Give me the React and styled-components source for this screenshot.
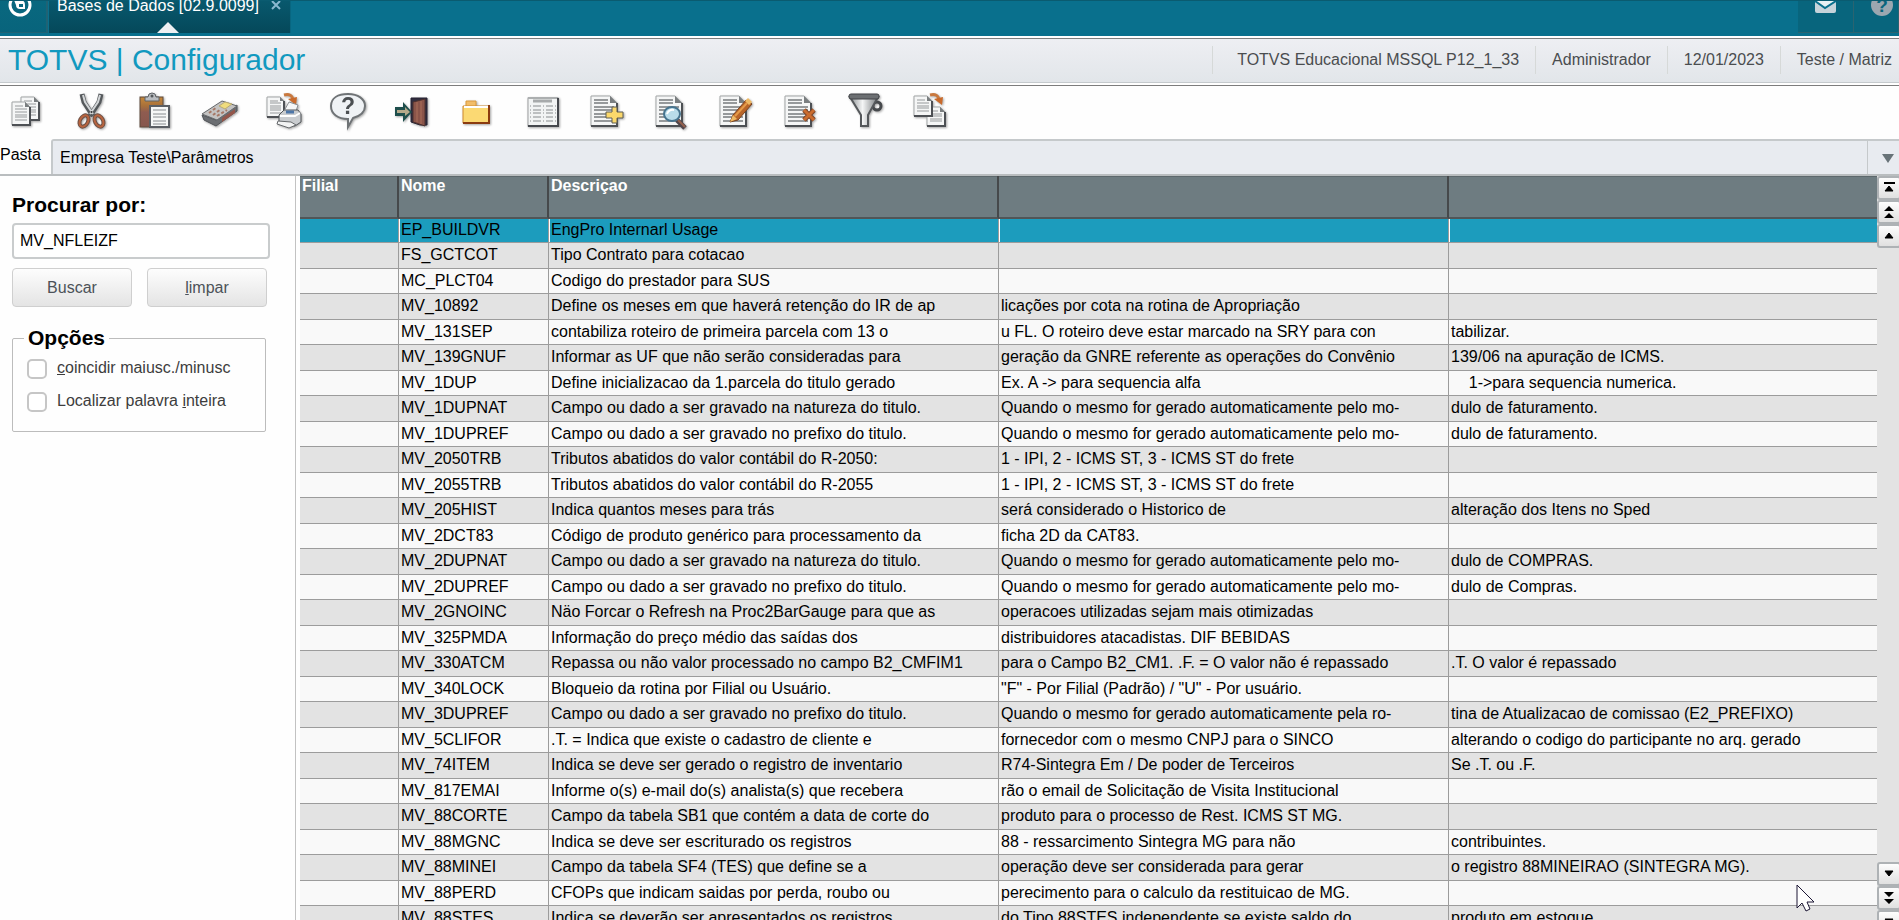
import React, { useState } from "react";
import styled, { createGlobalStyle } from "styled-components";

const GlobalStyle = createGlobalStyle`
  * {
    box-sizing: border-box;
  }
  body {
    margin: 0;
    overflow: hidden;
    background: #fefefe;
    color: #000;
    font-family: "Liberation Sans", Arial, sans-serif;
    font-size: 16px;
  }
  button,
  input {
    font: inherit;
  }
`;

const Page = styled.div`
  display: flex;
  flex-direction: column;
  height: 100vh;
  overflow: hidden;
`;

const TopBar = styled.header`
  display: flex;
  flex: none;
  height: 36px;
  padding-bottom: 3px;
  background: #09708d;
  border-top: 1px solid #0a5b70;
`;
const Home = styled.button`
  width: 48px;
  padding: 0 0 0 4px;
  border: none;
  border-right: 2px solid #1f6375;
  border-bottom: 1px solid #1f6375;
  background: linear-gradient(#09687f, #08647c);
  text-align: left;
  line-height: 0;
`;
const OpenTab = styled.div`
  position: relative;
  display: flex;
  align-items: flex-start;
  gap: 12px;
  width: 242px;
  margin-left: 1px;
  padding-left: 8px;
  background: linear-gradient(#08586d, #05485a);
  border-right: 1px solid #086680;
  color: #fff;

  &::after {
    content: "";
    position: absolute;
    left: 108px;
    bottom: 0;
    border: 11px solid transparent;
    border-top: none;
    border-bottom-color: #eef0f2;
  }
`;
const TabTitle = styled.span`
  line-height: 18px;
  margin-top: -4px;
`;
const TabClose = styled.button`
  padding: 0;
  border: none;
  background: none;
  line-height: 0;
`;
const TopActions = styled.div`
  display: flex;
  margin-left: auto;
`;
const TopAction = styled.button`
  width: ${(props) => props.$width};
  padding: 0;
  border: solid #2a6471;
  border-width: 0 1px 1px 0;
  background: #08657d;
  line-height: 0;
  overflow: hidden;
  text-align: left;
`;

const TitleBar = styled.div`
  display: flex;
  flex: none;
  align-items: center;
  height: 50px;
  padding: 0 7px 3px 8px;
  border-top: 2px solid #fff;
  border-bottom: 1px solid #7d7d7d;
  background: linear-gradient(#eeeff3, #e1e5e9);
  box-shadow: inset 0 1px #7d7d7d, inset 0 -2px #fff, inset 0 -3px #c5cacd;
`;
const Title = styled.h1`
  margin: 0;
  color: #1199bf;
  font-size: 30px;
  font-weight: normal;
  line-height: 40px;
`;
const Info = styled.ul`
  display: flex;
  margin: 0 0 0 auto;
  padding: 0;
  list-style: none;
`;
const InfoItem = styled.li`
  padding: 0 16px;
  border-left: 1px solid #d6d9d8;
  color: #4a4d4f;
  line-height: 28px;
  white-space: nowrap;

  &:first-child {
    padding-left: 24px;
  }
  &:last-child {
    padding-right: 0;
  }
`;

const Toolbar = styled.nav`
  display: flex;
  flex: none;
  justify-content: space-between;
  align-items: center;
  max-width: 956px;
  height: 53px;
  padding: 0 8px 3px;
`;
const Tool = styled.button`
  width: 36px;
  height: 36px;
  padding: 0;
  border: none;
  background: none;
  line-height: 0;

  svg {
    overflow: visible;
    filter: drop-shadow(1px 1px 1px rgba(0, 0, 0, 0.35));
  }
`;

const PathBar = styled.div`
  display: flex;
  flex: none;
  height: 37px;
  border-bottom: 2px solid #b9bdbf;
`;
const PathLabel = styled.div`
  width: 51px;
  line-height: 32px;
`;
const Path = styled.div`
  flex: 1;
  padding-left: 7px;
  border: solid #c5c9cb;
  border-width: 2px 1px 0 2px;
  border-top-left-radius: 3px;
  background: #e8ebf0;
  line-height: 33px;
`;
const PathToggle = styled.button`
  width: 31px;
  padding: 0 0 0 9px;
  border: none;
  border-top: 2px solid #c5c9cb;
  background: #e8ebf0;
`;

const Main = styled.main`
  display: flex;
  flex: 1;
  min-height: 0;
`;
const Sidebar = styled.form`
  flex: none;
  width: 296px;
  margin-right: 4px;
  padding: 17px 25px 0 12px;
  border-right: 1px solid #c2c2c2;
`;
const SearchLabel = styled.label`
  display: block;
  font-size: 21px;
  font-weight: bold;
  line-height: 24px;
`;
const SearchInput = styled.input`
  width: 100%;
  height: 36px;
  margin-top: 6px;
  padding: 0 6px;
  border: 2px solid #c9cccd;
  border-radius: 4px;
  background: #fff;
  outline: none;
`;
const Buttons = styled.div`
  display: flex;
  gap: 15px;
  margin: 9px 3px 19px 0;
`;
const Button = styled.button`
  flex: 1;
  height: 39px;
  border: 1px solid #cfcfcf;
  border-radius: 4px;
  background: linear-gradient(#fdfdfd, #e4e4e4);
  color: #4c5258;
`;
const Options = styled.fieldset`
  display: flex;
  flex-direction: column;
  height: 106px;
  gap: 7px;
  margin: 0 4px 0 0;
  padding: 6px 14px 0;
  border: 1px solid #bcbcbc;
  border-radius: 2px;
`;
const Legend = styled.legend`
  margin-left: -3px;
  padding: 0 4px;
  font-size: 21px;
  font-weight: bold;
  line-height: 24px;
`;
const Option = styled.label`
  display: flex;
  align-items: center;
  gap: 10px;
  color: #3d3d3d;
  line-height: 26px;
  white-space: nowrap;
`;
const OptionText = styled.span`
  padding-bottom: 2px;
  line-height: 24px;
`;
const Checkbox = styled.input.attrs({ type: "checkbox" })`
  appearance: none;
  width: 20px;
  height: 20px;
  margin: 0;
  border: 2px solid #c6c6c6;
  border-radius: 5px;
  background: #fff;

  &:checked {
    background: #1c9cbd;
  }
`;

const GridWrap = styled.div`
  flex: 1;
  min-width: 0;
  overflow: hidden;
`;
const Grid = styled.table`
  width: 100%;
  table-layout: fixed;
  border-spacing: 0;
`;
const Col = styled.col`
  width: ${(props) => props.$width};
`;
const Th = styled.th`
  height: 43px;
  padding: 0 2px;
  border-right: 2px solid #46494b;
  border-bottom: 2px solid #515557;
  background: #6e7c81;
  box-shadow: inset 0 1px #5d686c;
  color: #fff;
  line-height: 19px;
  text-align: left;
  vertical-align: top;

  &:last-child {
    border-right: none;
  }
`;
const Td = styled.td`
  padding: 0 2px 1px;
  border-right: 1px solid #9c9c9c;
  border-bottom: 1px solid #9c9c9c;
  line-height: 22px;
  overflow: hidden;
  white-space: pre;

  &:last-child {
    border-right: none;
  }
`;
const Tr = styled.tr`
  height: 25px;
  background: #f9f9f9;

  &:nth-child(even) {
    height: 26px;
    background: #e3e3e3;
  }
  &:first-child {
    height: 24px;
    background: #1c9cbd;
  }
  &:first-child ${Td}:not(:last-child) {
    box-shadow: 1px 0 #fff;
  }
`;

const Scroller = styled.div`
  display: flex;
  flex: none;
  flex-direction: column;
  justify-content: space-between;
  width: 22px;
  background: #e3e3e3;
  overflow: hidden;
`;
const ScrollGroup = styled.div`
  display: flex;
  flex-direction: column;
  height: ${(props) => props.$height};
`;
const ScrollButton = styled.button`
  flex: none;
  width: 24px;
  height: 24px;
  padding: 0;
  border: 2px solid #aeb2b5;
  border-radius: 3px;
  background: linear-gradient(#fdfdfd, #e0e0e0);
  line-height: 0;
`;

const Pointer = styled.svg`
  position: absolute;
  left: 1796px;
  top: 884px;
`;

const Sheet = ({ x = 2, y = 3, w = 26, h = 30, fold = 7, lines = 7 }) => (
  <g>
    <path
      d={`M${x} ${y}h${w - fold}l${fold} ${fold}v${h - fold}h${-w}z`}
      fill="#f5f6f6"
      stroke="#a3a6a7"
    />
    <path
      d={`M${x} ${y + h}h${w}v${fold - h}`}
      fill="none"
      stroke="#4d5054"
      strokeWidth="2"
    />
    <path d={`M${x + w - fold} ${y}v${fold}h${fold}z`} fill="#7a7e80" />
    {Array.from({ length: lines }, (_, i) => {
      const step = (h - 6) / lines;
      const top = y + 4 + Math.round(i * step);
      return (
        <path
          key={i}
          d={`M${x + 3} ${top}h${top < y + fold + 1 ? w - fold - 5 : w - 6}`}
          stroke="#96999b"
          strokeWidth={fold > 6 ? 2 : 1}
        />
      );
    })}
  </g>
);

const CurvedArrow = () => (
  <g>
    <path d="M18 2q8-2 9 5" fill="none" stroke="#c9793f" strokeWidth="3" />
    <path d="M22 6l9-2-1 8z" fill="#c96a2b" />
  </g>
);

const icons = {
  Copiar: (
    <g>
      <Sheet x={13} y={4} w={18} h={23} fold={5} lines={6} />
      <Sheet x={4} y={9} w={18} h={23} fold={5} lines={6} />
    </g>
  ),
  Recortar: (
    <g fill="none">
      <path d="M9 1l2 8 9 14M28 1l-2 8-9 14" stroke="#55595c" strokeWidth="5" />
      <path d="M10 2l2 7 8 12M27 2l-2 7-8 12" stroke="#d3d6d8" strokeWidth="2" />
      <ellipse cx="11" cy="28" rx="4" ry="6" stroke="#6d5045" strokeWidth="4" transform="rotate(28 11 28)" />
      <ellipse cx="26" cy="28" rx="4" ry="6" stroke="#6d5045" strokeWidth="4" transform="rotate(-28 26 28)" />
      <ellipse cx="11" cy="28" rx="4" ry="6" stroke="#b8643f" strokeWidth="2" transform="rotate(28 11 28)" />
      <ellipse cx="26" cy="28" rx="4" ry="6" stroke="#b8643f" strokeWidth="2" transform="rotate(-28 26 28)" />
      <circle cx="18.500" cy="19" r="1" fill="#333" />
    </g>
  ),
  Colar: (
    <g>
      <defs>
        <linearGradient id="board" x2="0" y2="1">
          <stop stopColor="#c5883a" />
          <stop offset=".3" stopColor="#a8703a" />
          <stop offset=".5" stopColor="#8f5c50" />
          <stop offset="1" stopColor="#86564e" />
        </linearGradient>
      </defs>
      <rect x="3" y="4" width="23" height="30" fill="url(#board)" stroke="#5f4a3d" />
      <path d="M8 4h3q0-4 4-4t4 4h3v4h-14z" fill="#b9bcc0" stroke="#5e6266" />
      <circle cx="15" cy="3" r="1.500" fill="#55595c" />
      <rect x="13" y="13" width="19" height="21" fill="#f6f7f7" stroke="#5b5f65" strokeWidth="2" />
      <path d="M16 17h13M16 21h13M16 24h13M16 28h13M16 31h13" stroke="#888c90" />
    </g>
  ),
  Calculadora: (
    <g>
      <path d="M0 22l2 5 12 6 21-15v-6l-21 15z" fill="#6b6e72" stroke="#515458" />
      <path d="M20 29l13-9v-4l-13 9z" fill="#94564a" />
      <path d="M0 21L20 8l15 5-20 14z" fill="#c4c3c2" stroke="#65686b" />
      <path d="M17 13l6-4 7 2-7 5z" fill="#f0dc7d" stroke="#b9aa74" />
      <path d="M7 20l8-6M11 22l8-6M15 23l10-6" stroke="#a67866" strokeWidth="2" strokeDasharray="3 2" />
    </g>
  ),
  Imprimir: (
    <g>
      <Sheet x={1} y={4} w={17} h={20} fold={4} lines={6} />
      <CurvedArrow />
      <path d="M18 18l5-9 9 3-3 9z" fill="#f5f6f6" stroke="#8b8f92" />
      <path d="M13 22l5-5h14l3 4v8l-6 4-16-2z" fill="#c9cccf" stroke="#505458" />
      <path d="M14 23h15l5-3" fill="none" stroke="#fff" strokeWidth="2" />
      <path d="M20 19h8" stroke="#4e77a8" strokeWidth="3" />
      <path d="M12 28l13 1 5 3-7 3-12-4z" fill="#f2f3f3" stroke="#65686b" />
    </g>
  ),
  Ajuda: (
    <g>
      <path
        d="M17 1c10 0 17 5 17 12 0 6-5 10-12 12l-5 9v-8C7 26 0 21 0 13S7 1 17 1z"
        fill="#eff2f5"
        stroke="#6f7376"
        strokeWidth="2"
      />
      <text x="17" y="21" fill="#4b4f52" fontSize="23" fontWeight="bold" textAnchor="middle">
        ?
      </text>
    </g>
  ),
  Sair: (
    <g>
      <path d="M16 5h16v27h-7L16 29z" fill="#312d3f" stroke="#262333" />
      <path d="M18 9l12-3v27l-12-4z" fill="#8a5449" stroke="#4b302e" />
      <path d="M22 9v20M26 8v23" stroke="#a96f5b" />
      <path d="M0 14h8V9l9 10-9 10v-6H0z" fill="#1e4f4c" />
      <path d="M2 17h8v-3l5 5-5 4v-3H2z" fill="#b5a98a" />
    </g>
  ),
  Pasta: (
    <g>
      <path d="M6 14V8h10v6" fill="#f2bd68" stroke="#d99a3e" />
      <path d="M3 13h26v17H3z" fill="#fbd973" stroke="#cf8a2e" />
      <path d="M3 30h26V12" fill="none" stroke="#8b3b10" strokeWidth="2" />
      <path d="M4 14h24" stroke="#fff" strokeWidth="2" />
    </g>
  ),
  Tabela: (
    <g>
      <rect x="3" y="5" width="30" height="28" fill="#f2f4f4" stroke="#9da0a2" />
      <path d="M3 5h30" stroke="#acafb0" strokeWidth="2" />
      <path d="M3 33h30V5" fill="none" stroke="#45484d" strokeWidth="2" />
      <path d="M8 8h19" stroke="#a7aaab" strokeWidth="3" />
      <path
        d="M5 13h1m2 0h8m2 0h1m2 0h7m2 0h1M5 17h1m2 0h8m2 0h1m2 0h7m2 0h1M5 20h1m2 0h8m2 0h1m2 0h7m2 0h1M5 24h1m2 0h8m2 0h1m2 0h7m2 0h1M5 28h1m2 0h8m2 0h1m2 0h7m2 0h1"
        stroke="#888c8e"
      />
    </g>
  ),
  Incluir: (
    <g>
      <Sheet />
      <path d="M23 14h5v5h6v6h-6v5h-5v-5h-6v-6h6z" fill="#fbd86b" stroke="#5c5d54" />
    </g>
  ),
  Visualizar: (
    <g>
      <Sheet />
      <path d="M23 27l8 8" stroke="#50454a" strokeWidth="5" />
      <path d="M24 27l7 7" stroke="#94604c" strokeWidth="2" />
      <ellipse cx="18" cy="21" rx="8" ry="7" fill="#b9dcea" stroke="#47748f" strokeWidth="2" />
      <path d="M13 21q2-5 7-4" fill="none" stroke="#fff" strokeWidth="2" />
    </g>
  ),
  Alterar: (
    <g>
      <Sheet />
      <path d="M12 29l3-7L28 7l6 4-14 16z" fill="#b96528" stroke="#75401f" />
      <path d="M17 23L29 10" stroke="#e59a48" strokeWidth="2" />
      <path d="M12 29l3-7 4 4zM27 8l3-3 4 4-3 3z" fill="#efb963" />
    </g>
  ),
  Excluir: (
    <g>
      <Sheet />
      <path d="M21 17l10 10M31 17L21 27" stroke="#7d4529" strokeWidth="5" />
      <path d="M21 17l10 10M31 17L21 27" stroke="#cb6c2e" strokeWidth="3" />
    </g>
  ),
  Filtrar: (
    <g>
      <defs>
        <linearGradient id="cone">
          <stop stopColor="#8b8f92" />
          <stop offset=".45" stopColor="#f5f6f6" />
          <stop offset="1" stopColor="#777b7e" />
        </linearGradient>
      </defs>
      <circle cx="30" cy="13" r="4" fill="none" stroke="#46494c" strokeWidth="3" />
      <path d="M3 4h28l-10 18v11h-7V22z" fill="url(#cone)" stroke="#55585b" strokeWidth="2" />
      <rect x="2" y="1" width="30" height="5" rx="2" fill="#6c6f72" stroke="#404346" />
    </g>
  ),
  "Copiar registro": (
    <g>
      <Sheet x={15} y={14} w={18} h={19} fold={5} lines={5} />
      <Sheet x={2} y={3} w={18} h={20} fold={5} lines={5} />
      <CurvedArrow />
    </g>
  ),
};

const Triangle = ({ down }) => (
  <path d={down ? "M4 0h8l-4 5z" : "M4 5h8l-4-5z"} fill="#000" stroke="#000" />
);

const Arrow = ({ type, down }) => (
  <svg width="16" height="16" viewBox="0 0 16 16">
    {type === "end" && <path d="M3 3h11" stroke="#000" strokeWidth="2" />}
    {type === "page" ? (
      <path
        d={down ? "M3 2h10l-5 5zM3 9h10l-5 5z" : "M3 7h10l-5-5zM3 14h10l-5-5z"}
        fill="#000"
      />
    ) : (
      <g transform={type === "end" ? "translate(0 6)" : "translate(0 5)"}>
        <Triangle down={down} />
      </g>
    )}
  </svg>
);

const rows = [
  ["EP_BUILDVR", "EngPro Internarl Usage", "", ""],
  ["FS_GCTCOT", "Tipo Contrato para cotacao", "", ""],
  ["MC_PLCT04", "Codigo do prestador para SUS", "", ""],
  ["MV_10892", "Define os meses em que haverá retenção do IR de ap", "licações por cota na rotina de Apropriação", ""],
  ["MV_131SEP", "contabiliza roteiro de primeira parcela com 13 o", "u FL. O roteiro deve estar marcado na SRY para con", "tabilizar."],
  ["MV_139GNUF", "Informar as UF que não serão consideradas para", "geração da GNRE referente as operações do Convênio", "139/06 na apuração de ICMS."],
  ["MV_1DUP", "Define inicializacao da 1.parcela do titulo gerado", "Ex. A -> para sequencia alfa", "    1->para sequencia numerica."],
  ["MV_1DUPNAT", "Campo ou dado a ser gravado na natureza do titulo.", "Quando o mesmo for gerado automaticamente pelo mo-", "dulo de faturamento."],
  ["MV_1DUPREF", "Campo ou dado a ser gravado no prefixo do titulo.", "Quando o mesmo for gerado automaticamente pelo mo-", "dulo de faturamento."],
  ["MV_2050TRB", "Tributos abatidos do valor contábil do R-2050:", "1 - IPI, 2 - ICMS ST, 3 - ICMS ST do frete", ""],
  ["MV_2055TRB", "Tributos abatidos do valor contábil do R-2055", "1 - IPI, 2 - ICMS ST, 3 - ICMS ST do frete", ""],
  ["MV_205HIST", "Indica quantos meses para trás", "será considerado o Historico de", "alteração dos Itens no Sped"],
  ["MV_2DCT83", "Código de produto genérico para processamento da", "ficha 2D da CAT83.", ""],
  ["MV_2DUPNAT", "Campo ou dado a ser gravado na natureza do titulo.", "Quando o mesmo for gerado automaticamente pelo mo-", "dulo de COMPRAS."],
  ["MV_2DUPREF", "Campo ou dado a ser gravado no prefixo do titulo.", "Quando o mesmo for gerado automaticamente pelo mo-", "dulo de Compras."],
  ["MV_2GNOINC", "Näo Forcar o Refresh na Proc2BarGauge para que as", "operacoes utilizadas sejam mais otimizadas", ""],
  ["MV_325PMDA", "Informação do preço médio das saídas dos", "distribuidores atacadistas. DIF BEBIDAS", ""],
  ["MV_330ATCM", "Repassa ou não valor processado no campo B2_CMFIM1", "para o Campo B2_CM1. .F. = O valor não é repassado", ".T. O valor é repassado"],
  ["MV_340LOCK", "Bloqueio da rotina por Filial ou Usuário.", "\"F\" - Por Filial (Padrão) / \"U\" - Por usuário.", ""],
  ["MV_3DUPREF", "Campo ou dado a ser gravado no prefixo do titulo.", "Quando o mesmo for gerado automaticamente pela ro-", "tina de Atualizacao de comissao (E2_PREFIXO)"],
  ["MV_5CLIFOR", ".T. = Indica que existe o cadastro de cliente e", "fornecedor com o mesmo CNPJ para o SINCO", "alterando o codigo do participante no arq. gerado"],
  ["MV_74ITEM", "Indica se deve ser gerado o registro de inventario", "R74-Sintegra Em / De poder de Terceiros", "Se .T. ou .F."],
  ["MV_817EMAI", "Informe o(s) e-mail do(s) analista(s) que recebera", "rão o email de Solicitação de Visita Institucional", ""],
  ["MV_88CORTE", "Campo da tabela SB1 que contém a data de corte do", "produto para o processo de Rest. ICMS ST MG.", ""],
  ["MV_88MGNC", "Indica se deve ser escriturado os registros", "88 - ressarcimento Sintegra MG para não", "contribuintes."],
  ["MV_88MINEI", "Campo da tabela SF4 (TES) que define se a", "operação deve ser considerada para gerar", "o registro 88MINEIRAO (SINTEGRA MG)."],
  ["MV_88PERD", "CFOPs que indicam saidas por perda, roubo ou", "perecimento para o calculo da restituicao de MG.", ""],
  ["MV_88STES", "Indica se deverão ser apresentados os registros", "do Tipo 88STES independente se existe saldo do", "produto em estoque."],
];

const App = () => {
  const [search, setSearch] = useState("MV_NFLEIZF");

  return (
    <Page>
      <GlobalStyle />
      <TopBar>
        <Home aria-label="TOTVS">
          <svg width="32" height="32" viewBox="0 0 32 32">
            <circle cx="16" cy="4" r="10" fill="none" stroke="#fff" strokeWidth="3" />
            <path d="M10 -1h6q5 0 5 5v4h-5q-4 0-4-4z" fill="#fff" />
            <path d="M15 3h4v3h-4z" fill="#09687f" />
          </svg>
        </Home>
        <OpenTab>
          <TabTitle>Bases de Dados [02.9.0099]</TabTitle>
          <TabClose aria-label="Fechar">
            <svg width="10" height="10" viewBox="0 0 10 10">
              <path d="M1 0l8 8M9 0L1 8" stroke="#8ab8d0" strokeWidth="2" />
            </svg>
          </TabClose>
        </OpenTab>
        <TopActions>
          <TopAction $width="56px" aria-label="Mensagens">
            <svg width="55" height="32" viewBox="0 0 55 32">
              <path d="M17-4h21v14q0 2-2 2H19q-2 0-2-2z" fill="#c6d3da" />
              <path d="M17 0l10 7 11-7" fill="#e7f1f4" stroke="#09708d" strokeWidth="2" />
            </svg>
          </TopAction>
          <TopAction $width="45px" aria-label="Ajuda">
            <svg width="45" height="32" viewBox="0 0 45 32">
              <circle cx="28" cy="4" r="11" fill="#9ba7b0" />
              <text x="28" y="11" fill="#09657d" fontSize="19" fontWeight="bold" textAnchor="middle">
                ?
              </text>
            </svg>
          </TopAction>
        </TopActions>
      </TopBar>

      <TitleBar>
        <Title>TOTVS | Configurador</Title>
        <Info>
          <InfoItem>TOTVS Educacional MSSQL P12_1_33</InfoItem>
          <InfoItem>Administrador</InfoItem>
          <InfoItem>12/01/2023</InfoItem>
          <InfoItem>Teste / Matriz</InfoItem>
        </Info>
      </TitleBar>

      <Toolbar>
        {Object.entries(icons).map(([name, drawing]) => (
          <Tool key={name} aria-label={name}>
            <svg width="36" height="36" viewBox="0 0 36 36">
              {drawing}
            </svg>
          </Tool>
        ))}
      </Toolbar>

      <PathBar>
        <PathLabel>Pasta</PathLabel>
        <Path>Empresa Teste\Parâmetros</Path>
        <PathToggle aria-label="Abrir pastas">
          <svg width="12" height="9" viewBox="0 0 12 9">
            <path d="M0 0h12L6 9z" fill="#687378" />
          </svg>
        </PathToggle>
      </PathBar>

      <Main>
        <Sidebar onSubmit={(e) => e.preventDefault()}>
          <SearchLabel htmlFor="search">Procurar por:</SearchLabel>
          <SearchInput
            id="search"
            type="text"
            value={search}
            onChange={(e) => setSearch(e.target.value)}
          />
          <Buttons>
            <Button type="submit">Buscar</Button>
            <Button type="button" onClick={() => setSearch("")}>
              <u>l</u>impar
            </Button>
          </Buttons>
          <Options>
            <Legend>Opções</Legend>
            <Option>
              <Checkbox />
              <OptionText>
                <u>c</u>oincidir maiusc./minusc
              </OptionText>
            </Option>
            <Option>
              <Checkbox />
              <OptionText>
                Localizar palavra <u>i</u>nteira
              </OptionText>
            </Option>
          </Options>
        </Sidebar>

        <GridWrap>
          <Grid>
            <colgroup>
              <Col $width="99px" />
              <Col $width="150px" />
              <Col $width="450px" />
              <Col $width="450px" />
              <Col />
            </colgroup>
            <thead>
              <tr>
                <Th>Filial</Th>
                <Th>Nome</Th>
                <Th>Descriçao</Th>
                <Th />
                <Th />
              </tr>
            </thead>
            <tbody>
              {rows.map((row) => (
                <Tr key={row[0]}>
                  <Td />
                  {row.map((cell, i) => (
                    <Td key={i}>{cell}</Td>
                  ))}
                </Tr>
              ))}
            </tbody>
          </Grid>
        </GridWrap>

        <Scroller>
          <ScrollGroup>
            <ScrollButton aria-label="Primeiro">
              <Arrow type="end" />
            </ScrollButton>
            <ScrollButton aria-label="Página anterior">
              <Arrow type="page" />
            </ScrollButton>
            <ScrollButton aria-label="Anterior">
              <Arrow />
            </ScrollButton>
          </ScrollGroup>
          <ScrollGroup $height="58px">
            <ScrollButton aria-label="Próximo">
              <Arrow down />
            </ScrollButton>
            <ScrollButton aria-label="Próxima página">
              <Arrow type="page" down />
            </ScrollButton>
            <ScrollButton aria-label="Último">
              <Arrow down />
            </ScrollButton>
          </ScrollGroup>
        </Scroller>
      </Main>

      <Pointer width="20" height="30" viewBox="0 0 20 30">
        <path
          d="M1 1v23l5-5 4 8 4-2-3-7h7z"
          fill="#fff"
          stroke="#1c1735"
        />
      </Pointer>
    </Page>
  );
};

export default App;
